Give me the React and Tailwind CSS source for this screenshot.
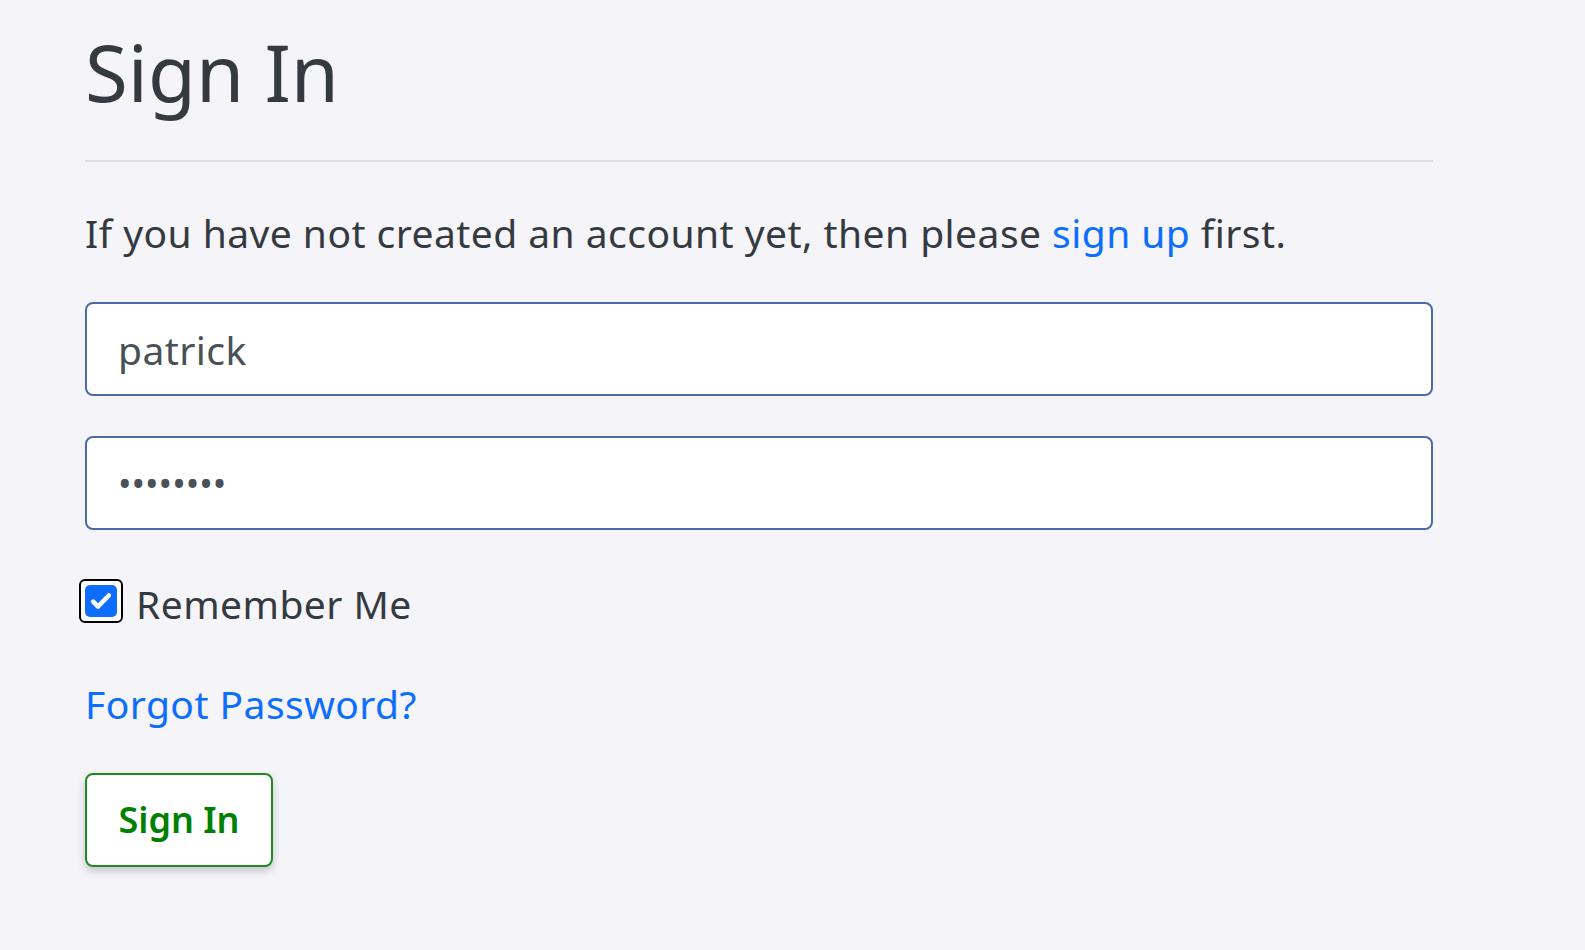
import React from "react";

export default function App() {
  return (
    <div className="min-h-screen w-full bg-[#f4f4f9] text-[#343a40]" style={{ fontFamily: '"Noto Sans", "Open Sans", sans-serif' }}>
      <div className="ml-[85px] w-[1348px] pt-[24px]">
        <h1 className="text-[78px] leading-[96px] font-normal text-[#343a40]">Sign In</h1>
        <hr className="mt-[40px] border-0 h-[2px] bg-[#dcdce2]" />
        <p className="mt-[47px] text-[39px] leading-[48px] tracking-[0.45px]">
          If you have not created an account yet, then please{" "}
          <a href="#" className="text-[#0d6efd]">sign up</a> first.
        </p>
        <form className="mt-[45px] flex flex-col" onSubmit={(e) => e.preventDefault()}>
          <input
            type="text"
            defaultValue="patrick"
            className="h-[94px] w-full rounded-[8px] border-2 border-[#4a6aa8] bg-white px-[31px] text-[39px] tracking-[0.45px] text-[#495057] outline-none"
          />
          <input
            type="password"
            defaultValue="password"
            className="mt-[40px] h-[94px] w-full rounded-[8px] border-2 border-[#4a6aa8] bg-white px-[31px] text-[36px] text-[#495057] outline-none"
          />
          <label className="mt-[44px] flex items-center gap-[13px] -ml-[6px]">
            <span className="flex h-[44px] w-[44px] items-center justify-center rounded-[6px] border-2 border-black bg-white">
              <span className="flex h-[32px] w-[32px] items-center justify-center rounded-[5px] bg-[#0d6efd]">
                <svg width="26" height="26" viewBox="0 0 16 16" fill="none">
                  <path d="M3.2 8.4l3 3L12.8 4.6" stroke="white" strokeWidth="2.8" strokeLinecap="round" strokeLinejoin="round" />
                </svg>
              </span>
            </span>
            <span className="text-[39px] leading-[48px] tracking-[0.45px] mt-[6px]">Remember Me</span>
          </label>
          <a href="#" className="mt-[52px] text-[39px] leading-[48px] tracking-[0.45px] text-[#0d6efd]">Forgot Password?</a>
          <div className="mt-[45px]">
            <button
              type="submit"
              className="h-[94px] w-[188px] rounded-[8px] border-2 border-[#1f8a1f] bg-white text-[36px] font-semibold text-[#008000] shadow-[0_4px_8px_rgba(0,0,0,0.2)]"
            >
              Sign In
            </button>
          </div>
        </form>
      </div>
    </div>
  );
}
